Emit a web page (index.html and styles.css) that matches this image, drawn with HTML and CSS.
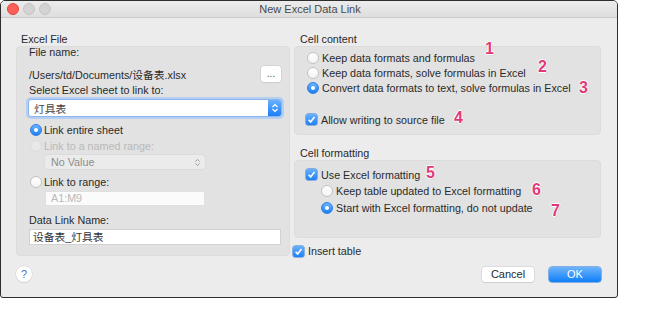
FILE: index.html
```html
<!DOCTYPE html>
<html lang="en">

<head>
	<meta charset="UTF-8">
	<meta name="viewport" content="width=device-width, initial-scale=1.0">
	<title>New Excel Data Link</title>

	<link rel="stylesheet" href="styles.css">
</head>

<body>
	<div class="window">
		<div class="titlebar">
			<div class="lights">
				<span class="light light--close"></span>
				<span class="light"></span>
				<span class="light"></span>
			</div>
			<div class="title">New Excel Data Link</div>
			<div></div>
		</div>

		<div class="content">
			<div class="col col--left">
				<div class="section-label">Excel File</div>
				<div class="group group--file">
					<div class="file-label">File name:</div>
					<div class="path-row">
						<span class="path">/Users/td/Documents/设备表.xlsx</span>
						<button class="dots">...</button>
					</div>
					<div class="line">Select Excel sheet to link to:</div>
					<div class="select select--focus">
						<span class="select__text">灯具表</span>
						<span class="select__arrows">
							<svg viewBox="0 0 8 12" width="8" height="12"><path d="M1.5 5 L4 2.5 L6.5 5 M1.5 7 L4 9.5 L6.5 7" fill="none" stroke="#fff" stroke-width="1.2"/></svg>
						</span>
					</div>
					<div class="option option--left option--first">
						<span class="radio radio--on"></span>
						<span>Link entire sheet</span>
					</div>
					<div class="option option--left option--disabled">
						<span class="radio radio--disabled"></span>
						<span>Link to a named range:</span>
					</div>
					<div class="popup">
						<span>No Value</span>
						<svg viewBox="0 0 8 12" width="7" height="11"><path d="M1.5 5 L4 2.5 L6.5 5 M1.5 7 L4 9.5 L6.5 7" fill="none" stroke="#9a9a9a" stroke-width="1.1"/></svg>
					</div>
					<div class="option option--left option--range">
						<span class="radio"></span>
						<span>Link to range:</span>
					</div>
					<div class="field field--range">A1:M9</div>
					<div class="line line--name">Data Link Name:</div>
					<div class="field field--name">设备表_灯具表</div>
				</div>
			</div>

			<div class="col col--right">
				<div class="section-label section-label--right">Cell content</div>
				<div class="group group--content">
					<div class="option">
						<span class="radio"></span>
						<span>Keep data formats and formulas</span>
					</div>
					<div class="option">
						<span class="radio"></span>
						<span>Keep data formats, solve formulas in Excel</span>
					</div>
					<div class="option">
						<span class="radio radio--on"></span>
						<span>Convert data formats to text, solve formulas in Excel</span>
					</div>
					<div class="option option--check option--allow">
						<span class="checkbox">
							<svg viewBox="0 0 11 11" width="11" height="11"><path d="M2.6 5.7 L4.6 7.9 L8.5 3" fill="none" stroke="#fff" stroke-width="1.6"/></svg>
						</span>
						<span>Allow writing to source file</span>
					</div>
				</div>

				<div class="section-label section-label--right section-label--second">Cell formatting</div>
				<div class="group group--format">
					<div class="option option--check">
						<span class="checkbox">
							<svg viewBox="0 0 11 11" width="11" height="11"><path d="M2.6 5.7 L4.6 7.9 L8.5 3" fill="none" stroke="#fff" stroke-width="1.6"/></svg>
						</span>
						<span>Use Excel formatting</span>
					</div>
					<div class="option option--sub">
						<span class="radio"></span>
						<span>Keep table updated to Excel formatting</span>
					</div>
					<div class="option option--sub">
						<span class="radio radio--on"></span>
						<span>Start with Excel formatting, do not update</span>
					</div>
				</div>

				<div class="option option--check option--insert">
					<span class="checkbox">
						<svg viewBox="0 0 11 11" width="11" height="11"><path d="M2.6 5.7 L4.6 7.9 L8.5 3" fill="none" stroke="#fff" stroke-width="1.6"/></svg>
					</span>
					<span>Insert table</span>
				</div>
			</div>
		</div>

		<div class="footer">
			<span class="help">?</span>
			<div class="buttons">
				<button class="btn">Cancel</button>
				<button class="btn btn--ok">OK</button>
			</div>
		</div>

		<span class="marker marker--1">1</span>
		<span class="marker marker--2">2</span>
		<span class="marker marker--3">3</span>
		<span class="marker marker--4">4</span>
		<span class="marker marker--5">5</span>
		<span class="marker marker--6">6</span>
		<span class="marker marker--7">7</span>
	</div>
</body>

</html>
```

FILE: styles.css
```css
body {
	font-family: "Liberation Sans", Arial, "Noto Sans CJK SC", sans-serif;
	font-size: 10.75px;
	color: #2a2a2a;
	margin: 0;
	padding: 0;
	background-color: #fff;
}

.window {
	position: relative;
	box-sizing: border-box;
	width: 618px;
	height: 298px;
	border: 1px solid #2e2e2e;
	border-radius: 5px 5px 3px 3px;
	background-color: #ececec;
	overflow: hidden;
}

.titlebar {
	display: grid;
	grid-template-columns: 1fr auto 1fr;
	align-items: center;
	height: 16px;
	border-bottom: 1px solid #cacaca;
	background: linear-gradient(#ececec, #dedede);
	font-size: 11px;
}

.lights {
	display: flex;
	gap: 4px;
	padding-left: 6px;
}

.light {
	width: 10px;
	height: 10px;
	border-radius: 50%;
	background-color: #d3d3d3;
	border: 0.5px solid #c4c4c4;
}

.light--close {
	background-color: #fc5f57;
	border-color: #e2463f;
}

.title {
	color: #4a4a4a;
	padding-left: 2px;
}

.content {
	display: flex;
	gap: 4px;
	padding: 15px 16px 0 15px;
}

.col--left {
	width: 274px;
}

.col--right {
	width: 307px;
}

.section-label {
	line-height: 13px;
	padding-left: 5px;
}

.section-label--right {
	padding-left: 6px;
}

.section-label--second {
	margin-top: 12px;
}

.group {
	box-sizing: border-box;
	background-color: #e2e2e2;
	border: 1px solid #dcdcdc;
	border-radius: 4px;
}

.group--file {
	height: 210px;
	padding: 0 7px 0 11px;
}

.file-label {
	line-height: 10px;
	margin-left: 1px;
}

.path-row {
	display: flex;
	justify-content: space-between;
	align-items: center;
	height: 18px;
	margin-top: 8px;
	margin-left: 1px;
}

.dots {
	width: 20px;
	height: 16px;
	margin-right: 1px;
	padding: 0 0 2px;
	border: none;
	border-radius: 3px;
	background-color: #fff;
	box-shadow: 0 0 0 0.5px #c8c8c8, 0 1px 1px rgba(0, 0, 0, 0.08);
	font-family: inherit;
	font-size: 10px;
	color: #555;
}

.line {
	line-height: 12px;
	margin-top: 1px;
	margin-left: 1px;
}

.line--name {
	margin-top: 8px;
}

.select {
	display: flex;
	justify-content: space-between;
	align-items: center;
	box-sizing: border-box;
	height: 18px;
	margin-top: 3px;
	background-color: #fff;
	border: 1px solid #8fb4e9;
	border-radius: 3px;
}

.select--focus {
	box-shadow: 0 0 0 2px #b3cff2;
}

.select__text {
	padding-left: 5px;
	color: #444;
}

.select__arrows {
	display: flex;
	justify-content: center;
	align-items: center;
	width: 13px;
	height: 16px;
	border-radius: 0 2px 2px 0;
	background: linear-gradient(#6cb1fb, #1c7ff5);
}

.option {
	display: flex;
	align-items: center;
	gap: 3px;
	height: 15px;
}

.option--left {
	margin-left: 2px;
	gap: 2px;
	height: 14px;
	margin-top: 2px;
}

.option--first {
	margin-top: 6px;
}

.option--range {
	margin-top: 6px;
}

.option--disabled {
	color: #b9b9b9;
}

.radio {
	box-sizing: border-box;
	position: relative;
	width: 12px;
	height: 12px;
	border-radius: 50%;
	background: linear-gradient(#fff, #f4f4f4);
	border: 1px solid #c2c2c2;
}

.radio--on {
	background: linear-gradient(#6ab3ff, #1a80f8);
	border-color: #2f7fe0;
}

.radio--on::after {
	content: "";
	position: absolute;
	top: 3px;
	left: 3px;
	width: 4px;
	height: 4px;
	border-radius: 50%;
	background-color: #fff;
}

.radio--disabled {
	background: #e8e8e8;
	border-color: #dadada;
}

.popup {
	display: flex;
	justify-content: space-between;
	align-items: center;
	box-sizing: border-box;
	width: 160px;
	height: 14px;
	margin: 2px 0 0 17px;
	padding: 0 4px 0 6px;
	background-color: #ebebeb;
	border-radius: 3px;
	box-shadow: 0 0 0 0.5px #d6d6d6;
	color: #8d8d8d;
}

.field {
	box-sizing: border-box;
	background-color: #fff;
	border: 1px solid #d2d2d2;
}

.field--range {
	width: 160px;
	height: 15px;
	margin: 2px 0 0 17px;
	padding-left: 5px;
	line-height: 13px;
	color: #b9b9b9;
	background-color: #fbfbfb;
	border-color: #e0e0e0;
}

.field--name {
	height: 16px;
	margin: 3px 1px 0 1px;
	padding-left: 3px;
	line-height: 14px;
	color: #333;
}

.group--content {
	height: 89px;
	padding: 3px 0 0 12px;
}

.option--allow {
	margin-top: 17px;
}

.option--check {
	gap: 4px;
	margin-left: -1px;
}

.checkbox {
	display: flex;
	width: 11px;
	height: 11px;
	border-radius: 2px;
	background: linear-gradient(#68b0fc, #1f80f3);
	box-shadow: 0 0 0 0.5px #2f78d6;
}

.group--format {
	height: 78px;
	padding: 6px 0 0 12px;
}

.option--sub {
	margin-left: 14px;
	margin-top: 1.5px;
}

.option--insert {
	margin-top: 6px;
	margin-left: -1px;
	height: 14px;
}

.footer {
	display: flex;
	justify-content: space-between;
	align-items: center;
	margin-top: 8px;
	padding: 0 16px 0 15px;
}

.help {
	display: flex;
	justify-content: center;
	align-items: center;
	width: 16px;
	height: 16px;
	border-radius: 50%;
	background-color: #fff;
	box-shadow: 0 0 0 0.5px #d0d0d0, 0 1px 1px rgba(0, 0, 0, 0.1);
	color: #4f6fae;
	font-size: 11px;
}

.buttons {
	display: flex;
	gap: 15px;
}

.btn {
	width: 52px;
	height: 15px;
	padding: 0;
	border: none;
	border-radius: 3px;
	background-color: #fff;
	box-shadow: 0 0 0 0.5px #cbcbcb, 0 1px 1px rgba(0, 0, 0, 0.1);
	font-family: inherit;
	font-size: 11px;
	color: #2a2a2a;
}

.btn--ok {
	background: linear-gradient(#6fb4fb, #0f7ff8);
	box-shadow: 0 0 0 0.5px #1d72d8;
	color: #fff;
}

.marker {
	position: absolute;
	font-size: 16px;
	font-weight: bold;
	line-height: 1;
	color: #e0397a;
	text-shadow: 1px 0 0 #fff, -1px 0 0 #fff, 0 1px 0 #fff, 0 -1px 0 #fff, 1px 1px 1px rgba(0, 0, 0, 0.15);
}

.marker--1 { left: 484px; top: 40px; }
.marker--2 { left: 537px; top: 58px; }
.marker--3 { left: 578px; top: 79px; }
.marker--4 { left: 453px; top: 109px; }
.marker--5 { left: 425px; top: 164px; }
.marker--6 { left: 531px; top: 181px; }
.marker--7 { left: 550px; top: 202px; }
```
